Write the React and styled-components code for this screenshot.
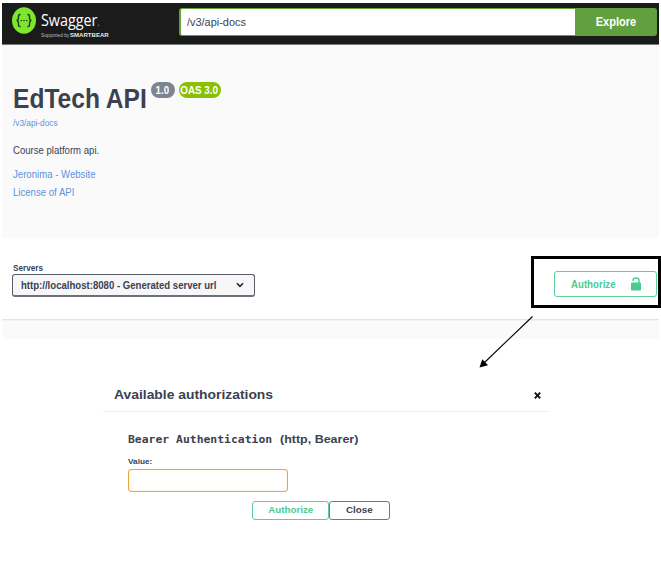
import React from "react";
import styled, { createGlobalStyle } from "styled-components";

const GlobalStyle = createGlobalStyle`
  * { box-sizing: border-box; }
  body { margin: 0; background: #fff; font-family: "Liberation Sans", Arial, sans-serif; color: #3b4151; overflow: hidden; }
`;

const Page = styled.main`
  position: relative;
  width: 661px;
  height: 574px;
  padding: 3px 2px 0;
  background: #fff;
`;

const Text = styled.span`
  display: block;
  flex: none;
  white-space: nowrap;
  font-size: ${(p) => p.$size}px;
  line-height: ${(p) => p.$line || 14}px;
  font-weight: ${(p) => (p.$bold ? 700 : 400)};
  color: ${(p) => p.$color || "#3b4151"};
  transform: scaleX(${(p) => p.$stretch || 1});
  transform-origin: ${(p) => p.$origin || "left"} center;
`;

const Link = styled(Text).attrs({ as: "a" })`
  color: #5b93e0;
`;

const Topbar = styled.header`
  display: flex;
  height: 42px;
  padding: 5px 2px 0 10px;
  background: #1b1b1b;
  border-bottom: 1px solid #77787a;
`;

const Brand = styled.div`
  display: flex;
  width: 167px;
`;

const LogoMark = styled.svg`
  flex: none;
  width: 24px;
  height: 27px;
  margin-top: -1px;
`;

const Wordmark = styled.div`
  margin-left: 5px;
  width: 100px;
`;

const BrandName = styled(Text)`
  font-family: "Open Sans", "Noto Sans", sans-serif;
`;

const TrademarkDot = styled.small`
  color: #999;
  font-size: 10px;
`;

const Supported = styled.div`
  display: flex;
  height: 8px;
  margin-top: -3px;
`;

const SupportedBy = styled(Text)`
  width: 29px;
`;

const UrlForm = styled.div`
  display: flex;
  width: 478px;
  height: 28px;
`;

const UrlInput = styled.div`
  flex: 1;
  padding: 6px 0 0 6px;
  background: #fff;
  border: 2px solid #62a03f;
  border-width: 1px 0 1px 2px;
  border-radius: 3px 0 0 3px;
`;

const ExploreButton = styled.div`
  display: flex;
  justify-content: center;
  align-items: center;
  width: 82px;
  background: #62a03f;
  border-radius: 0 3px 3px 0;
`;

const Info = styled.section`
  height: 193px;
  padding: 37px 0 0 10.5px;
  background: #fafafa;
`;

const TitleRow = styled.div`
  display: flex;
  height: 35px;
`;

const TitleBox = styled.div`
  width: 138px;
`;

const Badge = styled.span`
  display: flex;
  justify-content: center;
  width: ${(p) => p.$width}px;
  height: 16px;
  margin-right: 4px;
  border-radius: 8px;
  background: ${(p) => p.$bg};
`;

const Description = styled.div`
  margin: 14px 0 10px;
`;

const ContactLinks = styled.div`
  display: grid;
  gap: 3.5px;
`;

const Scheme = styled.section`
  display: flex;
  justify-content: space-between;
  height: 81px;
  padding: 24px 2px 0 10.5px;
  background: #fff;
`;

const Select = styled.div`
  display: flex;
  align-items: center;
  justify-content: space-between;
  width: 243px;
  height: 23px;
  margin-left: -0.5px;
  padding: 0 10px 0 8px;
  background: #f7f7f7;
  border: 1px solid #565b68;
  border-bottom: 2px solid #6b6f7a;
  border-radius: 3px;
`;

const AuthorizeButton = styled.div`
  display: flex;
  align-items: center;
  justify-content: space-between;
  width: 103px;
  height: 26px;
  margin-top: 9px;
  padding: 0 15px 0 16px;
  border: 1px solid #5fce99;
  border-radius: 3px;
`;

const Strip = styled.div`
  height: 20px;
  background: #fafafa;
  border-top: 1px solid #e3e3e3;
  box-shadow: inset 0 1px 0 #f3f3f3;
`;

const Modal = styled.section`
  width: 446px;
  margin: 43px 0 0 101px;
`;

const ModalHeader = styled.div`
  display: flex;
  align-items: center;
  justify-content: space-between;
  height: 30px;
  padding: 0 8px 3px 11.4px;
  border-bottom: 1px solid #efefef;
`;

const ModalBody = styled.div`
  padding: 21px 0 0 25px;
`;

const SchemeName = styled.div`
  display: flex;
`;

const CodeName = styled(Text)`
  width: 151.5px;
  font-family: "DejaVu Sans Mono", monospace;
`;

const FieldLabel = styled(Text).attrs({ as: "label" })`
  margin-top: 9px;
`;

const ValueInput = styled.div`
  width: 160px;
  height: 23px;
  margin-top: 1px;
  border: 1.5px solid #e9a93c;
  border-radius: 3px;
  box-shadow: inset 0 0 1px #e9a93c;
`;

const Actions = styled.div`
  display: flex;
  margin: 9px 0 0 124px;
`;

const ActionButton = styled.div`
  display: flex;
  justify-content: center;
  width: ${(p) => p.$width}px;
  height: 19px;
  border: 1px solid ${(p) => p.$border};
  border-radius: 3px;
`;

const Highlight = styled.div`
  position: absolute;
  left: 531px;
  top: 256px;
  width: 130px;
  height: 52px;
  border: 3px solid #000;
`;

const Arrow = styled.svg`
  position: absolute;
  left: 474px;
  top: 310px;
`;

export default function App() {
  return (
    <Page>
      <GlobalStyle />
      <Topbar>
        <Brand>
          <LogoMark viewBox="0 0 24 27">
            <ellipse cx="12" cy="13.5" rx="12" ry="13.2" fill="#7fe62e" />
            <g fill="none" stroke="#1d3b16" strokeWidth="1.4">
              <path d="M8.6 7.5C6.4 7.3 6.4 8.5 6.5 10.2C6.6 12.3 6.2 13.2 4.7 13.5C6.2 13.8 6.6 14.7 6.5 16.8C6.4 18.5 6.4 19.7 8.6 19.5" />
              <path d="M15.4 7.5C17.6 7.3 17.6 8.5 17.5 10.2C17.4 12.3 17.8 13.2 19.3 13.5C17.8 13.8 17.4 14.7 17.5 16.8C17.6 18.5 17.6 19.7 15.4 19.5" />
            </g>
            <g fill="#1d3b16">
              <circle cx="9.3" cy="13.5" r="0.8" />
              <circle cx="12" cy="13.5" r="0.8" />
              <circle cx="14.7" cy="13.5" r="0.8" />
            </g>
          </LogoMark>
          <Wordmark>
            <BrandName $size={16.5} $line={23} $color="#fff" $stretch={0.87}>
              Swagger<TrademarkDot>.</TrademarkDot>
            </BrandName>
            <Supported>
              <SupportedBy $size={5.5} $line={8} $color="#bbb" $stretch={0.86}>Supported by</SupportedBy>
              <Text $size={6} $line={8} $bold $color="#e8e8e8" $stretch={1.01}>SMARTBEAR</Text>
            </Supported>
          </Wordmark>
        </Brand>
        <UrlForm>
          <UrlInput><Text $size={11.5} $stretch={0.95}>/v3/api-docs</Text></UrlInput>
          <ExploreButton>
            <Text $size={12} $bold $color="#fff" $stretch={0.92} $origin="center">Explore</Text>
          </ExploreButton>
        </UrlForm>
      </Topbar>

      <Info>
        <TitleRow>
          <TitleBox><Text $size={27} $line={34} $bold $stretch={0.91}>EdTech API</Text></TitleBox>
          <Badge $width={24} $bg="#7d8492">
            <Text $size={10.5} $line={16} $bold $color="#fff" $stretch={0.92} $origin="center">1.0</Text>
          </Badge>
          <Badge $width={42} $bg="#89bf04">
            <Text $size={10.5} $line={16} $bold $color="#fff" $stretch={0.94} $origin="center">OAS 3.0</Text>
          </Badge>
        </TitleRow>
        <Link $size={9.5} $line={12} $stretch={0.87}>/v3/api-docs</Link>
        <Description><Text $size={11} $stretch={0.87}>Course platform api.</Text></Description>
        <ContactLinks>
          <Link $size={11} $stretch={0.873}>Jeronima - Website</Link>
          <Link $size={11} $stretch={0.873}>License of API</Link>
        </ContactLinks>
      </Info>

      <Scheme>
        <div>
          <Text $size={9.5} $line={12} $bold $stretch={0.86}>Servers</Text>
          <Select>
            <Text $size={10.5} $bold $stretch={0.913}>http://localhost:8080 - Generated server url</Text>
            <svg width="8" height="6" viewBox="0 0 8 6">
              <path d="M1 1.2L4 4.3L7 1.2" fill="none" stroke="#222" strokeWidth="1.5" />
            </svg>
          </Select>
        </div>
        <AuthorizeButton>
          <Text $size={10.5} $bold $color="#49cc90" $stretch={0.92}>Authorize</Text>
          <svg width="10" height="14" viewBox="0 0 10 14">
            <rect x="0" y="5.4" width="10" height="8" rx="1" fill="#49cc90" />
            <path d="M1.9 3.9C1.9 1.7 3.1 1 5 1C6.9 1 8 1.8 8 3.7V6.5" fill="none" stroke="#49cc90" strokeWidth="1.4" />
          </svg>
        </AuthorizeButton>
      </Scheme>
      <Strip />

      <Modal>
        <ModalHeader>
          <Text $size={13} $line={16} $bold $stretch={1.067}>Available authorizations</Text>
          <svg width="7" height="7" viewBox="0 0 7 7">
            <path d="M0.8 0.7L6.2 6.3M6.2 0.7L0.8 6.3" stroke="#111" strokeWidth="1.9" />
          </svg>
        </ModalHeader>
        <ModalBody>
          <SchemeName>
            <CodeName $size={10} $bold $stretch={1.14}>Bearer Authentication</CodeName>
            <Text $size={11.5} $line={13} $bold $stretch={1.085}>(http, Bearer)</Text>
          </SchemeName>
          <FieldLabel $size={7.5} $line={12} $bold $stretch={1.1}>Value:</FieldLabel>
          <ValueInput />
          <Actions>
            <ActionButton $width={77} $border="#5fce99">
              <Text $size={9} $line={16} $bold $color="#49cc90" $stretch={1.085} $origin="center">Authorize</Text>
            </ActionButton>
            <ActionButton $width={61} $border="#77777d">
              <Text $size={9} $line={17} $bold $stretch={1.09} $origin="center">Close</Text>
            </ActionButton>
          </Actions>
        </ModalBody>
      </Modal>

      <Highlight />
      <Arrow width="62" height="62" viewBox="0 0 62 62">
        <path d="M58.5 6.5L10 53" stroke="#000" strokeWidth="1.1" />
        <path d="M5.5 57.5L8.3 49.3L14 55.3Z" fill="#000" />
      </Arrow>
    </Page>
  );
}
